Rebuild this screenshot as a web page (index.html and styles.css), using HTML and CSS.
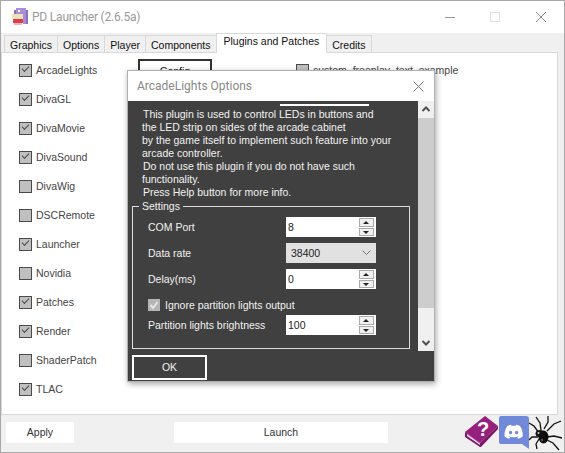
FILE: index.html
```html
<!DOCTYPE html>
<html>
<head>
<title>PD Launcher</title>
<link rel="stylesheet" href="styles.css">
</head>
<body>
<div class="window">
	<div class="titlebar">
		<svg class="appicon" width="18" height="18" viewBox="0 0 18 18" shape-rendering="crispEdges">
			<rect x="5" y="0" width="10" height="7" fill="#a78fd8"/>
			<rect x="3" y="2" width="2" height="5" fill="#8a70c4"/>
			<rect x="15" y="2" width="2" height="14" fill="#8a70c4"/>
			<rect x="7" y="2" width="2" height="2" fill="#fff"/>
			<rect x="1" y="6" width="11" height="5" fill="#eee0b8"/>
			<rect x="12" y="7" width="3" height="9" fill="#a78fd8"/>
			<rect x="2" y="11" width="10" height="4" fill="#d8404a"/>
			<rect x="3" y="15" width="8" height="2" fill="#f0b0c0"/>
		</svg>
		<span class="apptitle">PD Launcher (2.6.5a)</span>
		<div class="winctl">
			<svg width="120" height="12" viewBox="0 0 120 12">
				<path d="M19 6.5H29" stroke="#999" fill="none"/>
				<rect x="64.5" y="1.5" width="9" height="9" stroke="#e0e0e0" fill="none"/>
				<path d="M110 1L120 11M120 1L110 11" stroke="#8a8a8a" fill="none"/>
			</svg>
		</div>
	</div>

	<div class="tabs">
		<div class="tab">Graphics</div>
		<div class="tab">Options</div>
		<div class="tab">Player</div>
		<div class="tab">Components</div>
		<div class="tab active">Plugins and Patches</div>
		<div class="tab">Credits</div>
	</div>

	<div class="panel">
		<div class="pluginlist">
			<div class="chk on">ArcadeLights</div>
			<div class="chk on">DivaGL</div>
			<div class="chk on">DivaMovie</div>
			<div class="chk on">DivaSound</div>
			<div class="chk">DivaWig</div>
			<div class="chk">DSCRemote</div>
			<div class="chk on">Launcher</div>
			<div class="chk">Novidia</div>
			<div class="chk on">Patches</div>
			<div class="chk on">Render</div>
			<div class="chk">ShaderPatch</div>
			<div class="chk on">TLAC</div>
		</div>
		<div class="configbtn">Config</div>
		<div class="patchlist">
			<div class="chk">custom_freeplay_text_example</div>
		</div>
	</div>

	<div class="bottombar">
		<div class="btn applybtn">Apply</div>
		<div class="btn launchbtn">Launch</div>
		<div class="linkicons">
			<svg width="34" height="32" viewBox="0 0 34 32">
				<path d="M0 16L20 0L33 10L15 27Z" fill="#97207f"/>
				<path d="M0 16L0 21L15 31L16 28L15 27Z" fill="#7d1768"/>
				<path d="M2 18L15 27.5L15 29L2 20Z" fill="#ecdcea"/>
				<path d="M33 10L33 13L16 31L15 31L15 27Z" fill="#7d1768"/>
				<text x="12" y="20" class="bookmark">?</text>
			</svg>
			<svg width="30" height="33" viewBox="0 0 30 33">
				<path d="M2 0H27A3 3 0 0 1 30 3V33L23 28H2A2 2 0 0 1 0 26V2A2 2 0 0 1 2 0Z" fill="#7289da"/>
				<g transform="translate(5.5 6.7) scale(.76)">
					<path fill="#fff" d="M20.317 4.3698a19.7913 19.7913 0 00-4.8851-1.5152.0741.0741 0 00-.0785.0371c-.211.3753-.4447.8648-.6083 1.2495-1.8447-.2762-3.68-.2762-5.4868 0-.1636-.3933-.4058-.8742-.6177-1.2495a.077.077 0 00-.0785-.037 19.7363 19.7363 0 00-4.8852 1.515.0699.0699 0 00-.0321.0277C.5334 9.0458-.319 13.5799.0992 18.0578a.0824.0824 0 00.0312.0561c2.0528 1.5076 4.0413 2.4228 5.9929 3.0294a.0777.0777 0 00.0842-.0276c.4616-.6304.8731-1.2952 1.226-1.9942a.076.076 0 00-.0416-.1057c-.6528-.2476-1.2743-.5495-1.8722-.8923a.077.077 0 01-.0076-.1277c.1258-.0943.2517-.1923.3718-.2914a.0743.0743 0 01.0776-.0105c3.9278 1.7933 8.18 1.7933 12.0614 0a.0739.0739 0 01.0785.0095c.1202.099.246.1981.3728.2924a.077.077 0 01-.0066.1276 12.2986 12.2986 0 01-1.873.8914.0766.0766 0 00-.0407.1067c.3604.698.7719 1.3628 1.225 1.9932a.076.076 0 00.0842.0286c1.961-.6067 3.9495-1.5219 6.0023-3.0294a.077.077 0 00.0313-.0552c.5004-5.177-.8382-9.6739-3.5485-13.6604a.061.061 0 00-.0312-.0286zM8.02 15.3312c-1.1825 0-2.1569-1.0857-2.1569-2.419 0-1.3332.9555-2.4189 2.157-2.4189 1.2108 0 2.1757 1.0952 2.1568 2.419 0 1.3332-.9555 2.4189-2.1569 2.4189zm7.9748 0c-1.1825 0-2.1569-1.0857-2.1569-2.419 0-1.3332.9554-2.4189 2.1569-2.4189 1.2108 0 2.1757 1.0952 2.1568 2.419 0 1.3332-.946 2.4189-2.1568 2.4189Z"/>
				</g>
			</svg>
			<svg width="34" height="35" viewBox="0 0 34 35">
				<g stroke="#111" stroke-width="1.3" fill="none">
					<path d="M10 17L5 10L0 7"/>
					<path d="M12 14L11 7L7 1"/>
					<path d="M15 13L19 6L19 0"/>
					<path d="M18 15L25 8L32 5"/>
					<path d="M9 21L3 21L0 24"/>
					<path d="M10 23L7 28L8 33"/>
					<path d="M18 21L25 20L33 22"/>
					<path d="M18 24L24 27L30 34"/>
				</g>
				<ellipse cx="14.5" cy="21" rx="5" ry="6.5" fill="#0c0c0c"/>
				<ellipse cx="11" cy="17.5" rx="4.5" ry="3.5" fill="#111"/>
				<circle cx="9.5" cy="17" r="1" fill="#ddd"/>
				<circle cx="13" cy="24" r="1.2" fill="#555"/>
			</svg>
		</div>
	</div>

	<div class="dialog">
		<div class="dialogtitle">
			<span>ArcadeLights Options</span>
			<svg width="11" height="11" viewBox="0 0 11 11"><path d="M.5 .5L10.5 10.5M10.5 .5L.5 10.5" stroke="#777" fill="none"/></svg>
		</div>
		<div class="dialogbody">
			<div class="dialogscroll">
				<div class="scrollcontent">
					<div class="ledbar"></div>
					<div class="desc">
						<div class="ln1">This plugin is used to control LEDs in buttons and</div>
						<div>the LED strip on sides of the arcade cabinet</div>
						<div>by the game itself to implement such feature into your</div>
						<div>arcade controller.</div>
						<div class="ln1">Do not use this plugin if you do not have such</div>
						<div>functionality.</div>
						<div class="ln1">Press Help button for more info.</div>
					</div>
					<div class="settings">
						<div class="legend">Settings</div>
						<div class="field">
							<span>COM Port</span>
							<div class="spin"><span class="val">8</span><div class="arrows"><i class="up"></i><i class="down"></i></div></div>
						</div>
						<div class="field">
							<span>Data rate</span>
							<div class="combo"><span>38400</span>
								<svg width="9" height="6" viewBox="0 0 9 6"><path d="M.5 .5L4.5 4.5L8.5 .5" stroke="#777" fill="none"/></svg>
							</div>
						</div>
						<div class="field">
							<span>Delay(ms)</span>
							<div class="spin"><span class="val">0</span><div class="arrows"><i class="up"></i><i class="down"></i></div></div>
						</div>
						<div class="ignore">
							<svg width="12" height="12" viewBox="0 0 12 12"><rect width="12" height="12" fill="#b5b5b5"/><path d="M2.5 6L5 9L9.5 3" stroke="#e6e6e6" stroke-width="2" fill="none"/></svg>
							<span>Ignore partition lights output</span>
						</div>
						<div class="field">
							<span>Partition lights brightness</span>
							<div class="spin"><span class="val">100</span><div class="arrows"><i class="up"></i><i class="down"></i></div></div>
						</div>
					</div>
				</div>
				<div class="scrollbar">
					<svg width="16" height="17" viewBox="0 0 16 17"><path d="M4.5 10L8 6.5L11.5 10" stroke="#505050" stroke-width="2" fill="none"/></svg>
					<div class="thumb"></div>
					<div class="track"></div>
					<svg width="16" height="17" viewBox="0 0 16 17"><path d="M4.5 7L8 10.5L11.5 7" stroke="#505050" stroke-width="2" fill="none"/></svg>
				</div>
			</div>
			<div class="okbtn">OK</div>
		</div>
	</div>
</div>
</body>
</html>
```

FILE: styles.css
```css
* { box-sizing: border-box; }

body {
	margin: 0;
	font-family: "Liberation Sans", sans-serif;
	font-size: 10.5px;
	color: #222;
}

.window {
	position: relative;
	width: 565px;
	height: 453px;
	border: 1px solid #a8a8a8;
	background: #f0f0f0;
	display: flex;
	flex-direction: column;
	overflow: hidden;
}

.titlebar {
	height: 32px;
	flex: none;
	background: #fff;
	display: flex;
	align-items: center;
	padding-left: 10px;
}
.appicon { margin-right: 3px; }
.apptitle {
	font-family: "Roboto", sans-serif;
	font-size: 12px;
	letter-spacing: -.2px;
	color: #999;
	padding-bottom: 1px;
}
.winctl {
	margin-left: auto;
	margin-right: 18px;
	display: flex;
	padding-bottom: 1px;
}

.tabs {
	height: 20px;
	flex: none;
	display: flex;
	align-items: flex-end;
	padding-left: 3px;
}
.tab {
	height: 18px;
	padding: 0 5px;
	border: 1px solid #d9d9d9;
	border-bottom: 0;
	background: #f0f0f0;
	line-height: 18px;
	margin-right: -1px;
	color: #111;
	white-space: nowrap;
}
.tab.active {
	height: 20px;
	background: #fff;
	line-height: 15px;
	padding: 0 7px;
	position: relative;
	z-index: 1;
}

.panel {
	height: 363px;
	flex: none;
	margin-right: 6px;
	background: #fff;
	border: 1px solid #d9d9d9;
	margin-top: -1px;
	display: flex;
	padding: 9px 0 0 17px;
}
.pluginlist {
	width: 119px;
	display: flex;
	flex-direction: column;
	gap: 13px;
}
.chk {
	height: 16px;
	line-height: 16px;
	padding-left: 17px;
	color: #444;
	position: relative;
	white-space: nowrap;
}
.chk::before {
	content: "";
	position: absolute;
	left: 0;
	top: 2px;
	width: 11px;
	height: 11px;
	background: #c0c0c0;
	border: 1.5px solid #4a4a4a;
}
.chk.on::after {
	content: "";
	position: absolute;
	left: 3px;
	top: 4px;
	width: 6px;
	height: 3px;
	border-left: 1.5px solid #4a4a4a;
	border-bottom: 1.5px solid #4a4a4a;
	transform: rotate(-45deg);
}
.configbtn {
	width: 74px;
	height: 24px;
	margin: -3px 0 0 0;
	border: 2px solid #333;
	text-align: center;
	line-height: 20px;
}
.patchlist { margin-left: 84px; }

.bottombar {
	flex: 1;
	display: flex;
	align-items: flex-start;
	padding: 7px 0 0 5px;
}
.btn {
	height: 21px;
	background: #fff;
	text-align: center;
	line-height: 21px;
	color: #333;
}
.applybtn { width: 68px; }
.launchbtn { width: 214px; margin-left: 100px; }
.linkicons {
	margin-left: auto;
	margin-right: 1px;
	margin-top: -6px;
	display: flex;
	align-items: flex-start;
}
.bookmark {
	font-size: 20px;
	font-weight: bold;
	fill: #fff;
}

.dialog {
	position: absolute;
	left: 126px;
	top: 69px;
	width: 308px;
	height: 312px;
	background: #fff;
	border: 1px solid #b0b0b0;
	box-shadow: 1px 2px 6px rgba(0,0,0,.35);
	display: flex;
	flex-direction: column;
}
.dialogtitle {
	height: 30px;
	flex: none;
	display: flex;
	align-items: center;
	justify-content: space-between;
	padding: 0 10px 0 9px;
	font-family: "Roboto", sans-serif;
	font-size: 12px;
	color: #888;
}
.dialogbody {
	flex: 1;
	background: #404040;
	color: #f2f2f2;
	display: flex;
	flex-direction: column;
}
.dialogscroll {
	height: 250px;
	flex: none;
	display: flex;
}
.scrollcontent {
	width: 290px;
	padding-top: 3px;
}
.scrollbar {
	width: 16px;
	background: #f0f0f0;
	display: flex;
	flex-direction: column;
}
.scrollbar svg { flex: none; }
.thumb { height: 190px; background: #cdcdcd; flex: none; }
.track { flex: 1; }

.ledbar {
	width: 89px;
	height: 2px;
	margin-left: 152px;
	background: #fff;
}
.desc {
	line-height: 13px;
	margin-top: 2px;
	padding-left: 14px;
	white-space: nowrap;
}
.desc .ln1 { padding-left: 1px; }

.settings {
	position: relative;
	width: 278px;
	height: 143px;
	margin: 7px 0 0 4px;
	border: 1px solid #ddd;
	padding: 10px 33px 0 15px;
}
.legend {
	position: absolute;
	left: 6px;
	top: -8px;
	padding: 0 3px;
	line-height: 14px;
	background: #404040;
}
.field {
	display: flex;
	align-items: center;
	justify-content: space-between;
	height: 20px;
	margin-bottom: 6px;
	white-space: nowrap;
}
.spin, .combo {
	width: 90px;
	height: 20px;
	flex: none;
	color: #222;
	display: flex;
	align-items: center;
}
.spin { background: #fff; padding-left: 2px; }
.val { flex: 1; }
.arrows {
	width: 15px;
	height: 18px;
	margin-right: 2px;
	display: flex;
	flex-direction: column;
	gap: 1px;
	background: #fff;
}
.arrows i {
	flex: 1;
	display: block;
	background: #f0f0f0;
	border: 1px solid #aaa;
	position: relative;
}
.arrows i::after {
	content: "";
	position: absolute;
	left: 3px;
	top: 2px;
	border-left: 3.5px solid transparent;
	border-right: 3.5px solid transparent;
}
.arrows .up::after { border-bottom: 3px solid #222; }
.arrows .down::after { border-top: 3px solid #222; }
.combo {
	background: #e1e1e1;
	justify-content: space-between;
	padding: 0 5px;
}
.ignore {
	display: flex;
	align-items: center;
	gap: 5px;
	height: 16px;
	margin: 8px 0 2px 0;
	white-space: nowrap;
}

.okbtn {
	width: 75px;
	height: 25px;
	margin: 4px 0 0 4px;
	border: 2px solid #fff;
	text-align: center;
	line-height: 21px;
}
```
